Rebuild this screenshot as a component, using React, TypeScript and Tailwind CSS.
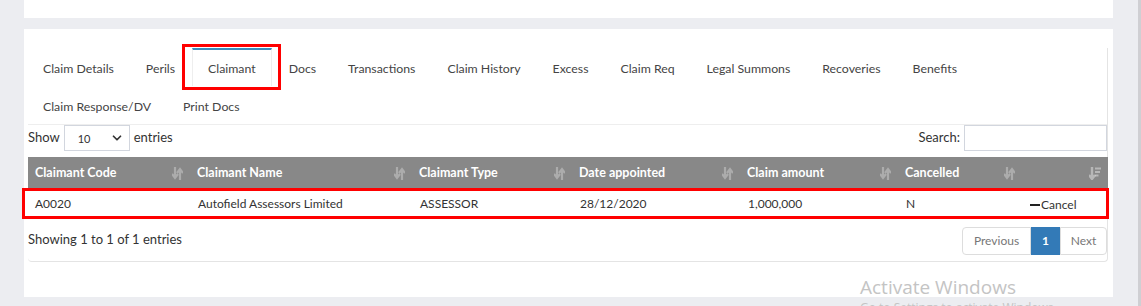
import { ChevronDown } from "lucide-react";

const tabsRow1 = [
  "Claim Details",
  "Perils",
  "Claimant",
  "Docs",
  "Transactions",
  "Claim History",
  "Excess",
  "Claim Req",
  "Legal Summons",
  "Recoveries",
  "Benefits",
];
const tabsRow2 = ["Claim Response/DV", "Print Docs"];

const columns = [
  { label: "Claimant Code", w: "w-[162px]" },
  { label: "Claimant Name", w: "w-[222px]" },
  { label: "Claimant Type", w: "w-[160px]" },
  { label: "Date appointed", w: "w-[168px]" },
  { label: "Claim amount", w: "w-[158px]" },
  { label: "Cancelled", w: "w-[124px]" },
  { label: "", w: "w-[86px]" },
];

function SortIcon() {
  return (
    <svg width="11" height="13" viewBox="0 0 11 13" className="text-white/30">
      <path d="M3 0v9M0 7l3 4 3-4" stroke="currentColor" strokeWidth="2.2" fill="none" />
      <path d="M8 13V4M5 6l3-4 3 4" stroke="currentColor" strokeWidth="2.2" fill="none" />
    </svg>
  );
}

function SortDescIcon() {
  return (
    <svg width="12" height="13" viewBox="0 0 12 13" className="text-white/40">
      <path d="M3 0v10M0 8l3 4 3-4" stroke="currentColor" strokeWidth="2.4" fill="none" />
      <path d="M6 1.5h6M6 5h5M6 8.5h3.5" stroke="currentColor" strokeWidth="2.2" fill="none" />
    </svg>
  );
}

function Tab({ label }: { label: string }) {
  const active = label === "Claimant";
  return (
    <div
      className={
        active
          ? "relative mr-[2px] h-[38px] px-[15px] leading-[38px] border-t-2 border-[#3c8dbc] border-x border-x-[#eeeeee]"
          : "relative mr-[2px] h-[38px] px-[15px] leading-[38px] border-t-2 border-transparent"
      }
    >
      {label}
      {active && (
        <div className="absolute -left-[11px] -right-[10px] -top-[6px] -bottom-[4px] border-[3px] border-[#ff0000]" />
      )}
    </div>
  );
}

export default function App() {
  return (
    <div
      className="relative w-[1141px] h-[306px] overflow-hidden bg-[#ecedf1] text-[13px] text-[#444]"
      style={{ fontFamily: "Lato, 'Noto Sans', sans-serif" }}
    >
      <div className="flex">
        <div className="w-[24px] shrink-0" />
        <div className="w-[1089px] shrink-0">
          <div className="h-[18px] bg-white" />
          <div className="mt-[11px] h-[268px] bg-white px-[4px] pt-[19px]">
            <div className="w-[1080px] rounded-b-[4px] border-r border-b border-[#e4e4e4] pb-[6px]">
              <div className="border-b border-[#eeeeee] text-[12.3px]">
                <div className="flex">
                  {tabsRow1.map((t) => (
                    <Tab key={t} label={t} />
                  ))}
                </div>
                <div className="flex">
                  {tabsRow2.map((t) => (
                    <Tab key={t} label={t} />
                  ))}
                </div>
              </div>

              <div className="flex h-[26px] items-center justify-between text-[#333]">
                <div className="flex items-center gap-[4px]">
                  <span>Show</span>
                  <div className="flex h-[26px] w-[66px] items-center justify-between border border-[#d2d6de] pl-[13px] pr-[5px] text-[11px]">
                    <span className="mt-[3px]">10</span>
                    <ChevronDown size={14} strokeWidth={3} className="text-[#333]" />
                  </div>
                  <span>entries</span>
                </div>
                <div className="flex items-center gap-[4px]">
                  <span>Search:</span>
                  <div className="h-[26px] w-[143px] border border-[#d2d6de]" />
                </div>
              </div>

              <div className="relative mt-[6px]">
                <table className="w-[1080px] table-fixed border-collapse">
                  <thead>
                    <tr className="h-[31px] bg-[#888888] text-left text-[12.5px] font-bold text-white">
                      {columns.map((c, i) => (
                        <th key={i} className={`${c.w} px-[7px] pt-[2px] font-bold`}>
                          <div className="flex items-center justify-between">
                            <span>{c.label}</span>
                            {i === 6 ? <SortDescIcon /> : <SortIcon />}
                          </div>
                        </th>
                      ))}
                    </tr>
                  </thead>
                  <tbody>
                    <tr className="h-[31px] text-[12px] text-[#333]">
                      <td className="px-[7px]">A0020</td>
                      <td className="px-[8px]">Autofield Assessors Limited</td>
                      <td className="px-[8px]">ASSESSOR</td>
                      <td className="px-[8px]">28/12/2020</td>
                      <td className="px-[8px]">1,000,000</td>
                      <td className="px-[8px]">N</td>
                      <td className="px-[8px]">
                        <span className="inline-flex items-center">
                          <span className="mr-px inline-block h-[2px] w-[10px] bg-[#222]" />
                          Cancel
                        </span>
                      </td>
                    </tr>
                  </tbody>
                </table>
                <div className="pointer-events-none absolute -left-[6px] -right-[2px] top-[31px] h-[31px] border-[3px] border-[#ff0000]" />
              </div>

              <div className="mt-[8px] flex items-center justify-between text-[#333]">
                <span className="-mt-[2px]">Showing 1 to 1 of 1 entries</span>
                <div className="flex h-[28px] text-[12px]">
                  <div className="flex w-[69px] items-center justify-center rounded-l-[4px] border border-[#ddd] text-[#777]">
                    Previous
                  </div>
                  <div className="flex w-[29px] items-center justify-center border border-[#337ab7] bg-[#337ab7] font-bold text-white">
                    1
                  </div>
                  <div className="flex w-[47px] items-center justify-center rounded-r-[4px] border border-[#ddd] text-[#777]">
                    Next
                  </div>
                </div>
              </div>
            </div>
          </div>
        </div>
        <div className="flex-1" />
        <div className="h-[306px] w-[3px] bg-[#cfcfd3]" />
      </div>

      <div className="pointer-events-none absolute left-[860px] top-[274px] text-[#c4c4c4]" style={{ fontFamily: "'Open Sans', sans-serif" }}>
        <div className="text-[19px] leading-[26px]">Activate Windows</div>
        <div className="text-[12px] leading-[16px]">Go to Settings to activate Windows.</div>
      </div>
    </div>
  );
}
